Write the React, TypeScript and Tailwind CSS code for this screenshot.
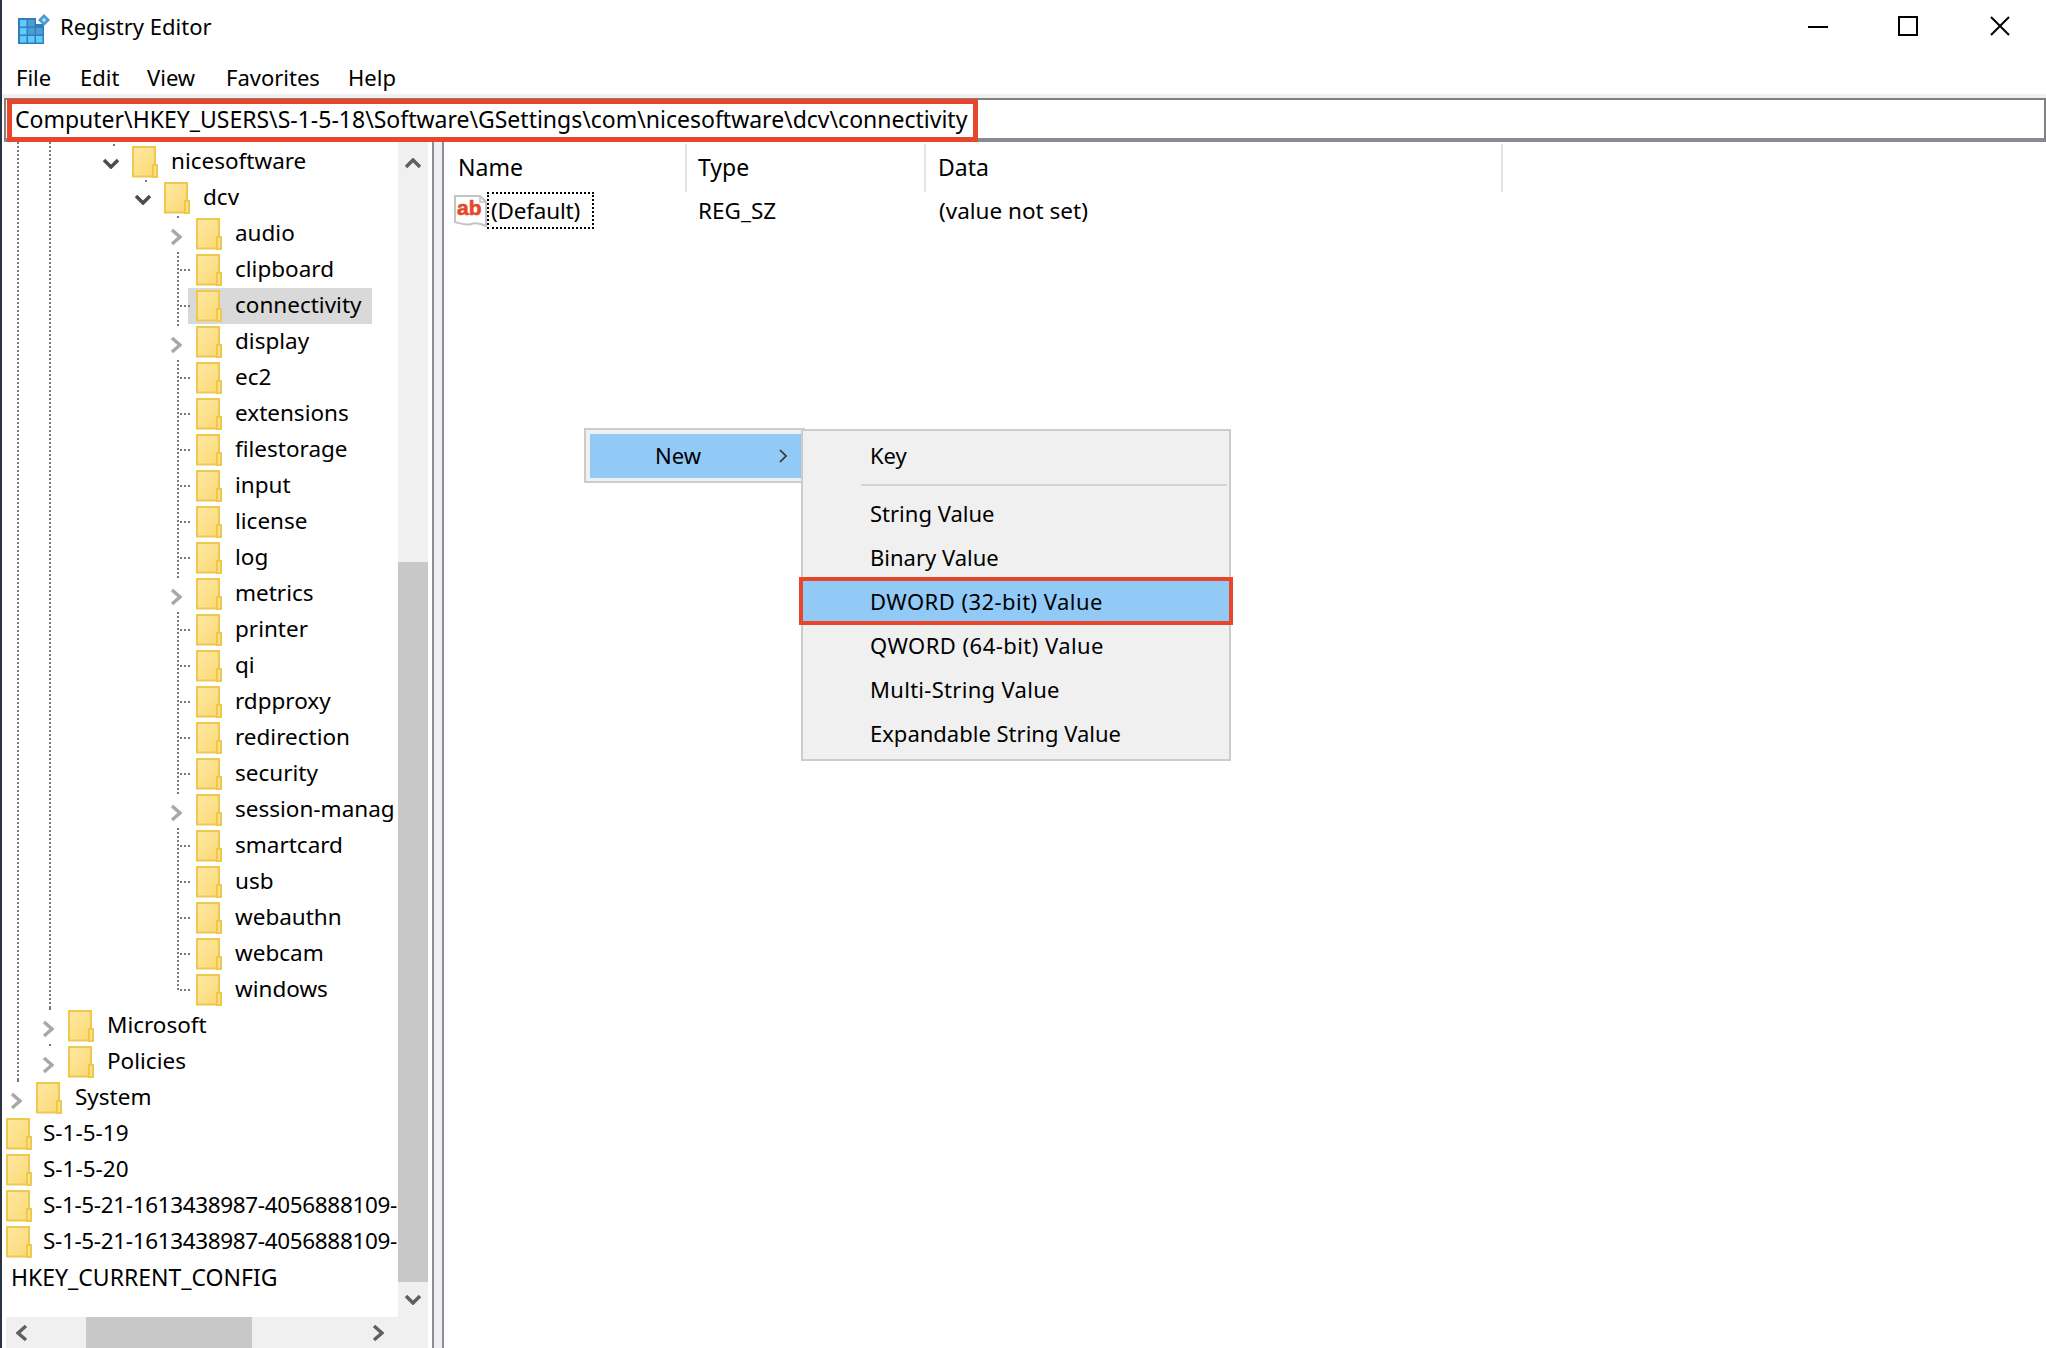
import React from "react";

type Row = {
  label: string;
  level: number;
  chevron?: "right" | "down";
  guide?: "mid" | "last";
  selected?: boolean;
};

const rows: Row[] = [
  { label: "nicesoftware", level: 4, chevron: "down" },
  { label: "dcv", level: 5, chevron: "down" },
  { label: "audio", level: 6, chevron: "right" },
  { label: "clipboard", level: 6, guide: "mid" },
  { label: "connectivity", level: 6, guide: "mid", selected: true },
  { label: "display", level: 6, chevron: "right" },
  { label: "ec2", level: 6, guide: "mid" },
  { label: "extensions", level: 6, guide: "mid" },
  { label: "filestorage", level: 6, guide: "mid" },
  { label: "input", level: 6, guide: "mid" },
  { label: "license", level: 6, guide: "mid" },
  { label: "log", level: 6, guide: "mid" },
  { label: "metrics", level: 6, chevron: "right" },
  { label: "printer", level: 6, guide: "mid" },
  { label: "qi", level: 6, guide: "mid" },
  { label: "rdpproxy", level: 6, guide: "mid" },
  { label: "redirection", level: 6, guide: "mid" },
  { label: "security", level: 6, guide: "mid" },
  { label: "session-manag", level: 6, chevron: "right" },
  { label: "smartcard", level: 6, guide: "mid" },
  { label: "usb", level: 6, guide: "mid" },
  { label: "webauthn", level: 6, guide: "mid" },
  { label: "webcam", level: 6, guide: "mid" },
  { label: "windows", level: 6, guide: "last" },
  { label: "Microsoft", level: 2, chevron: "right" },
  { label: "Policies", level: 2, chevron: "right" },
  { label: "System", level: 1, chevron: "right" },
  { label: "S-1-5-19", level: 0 },
  { label: "S-1-5-20", level: 0 },
  { label: "S-1-5-21-1613438987-4056888109-", level: 0 },
  { label: "S-1-5-21-1613438987-4056888109-", level: 0 },
];

const subItems = [
  { label: "String Value", track: "" },
  { label: "Binary Value", track: "" },
  { label: "DWORD (32-bit) Value", track: "tracking-[0.45px]" },
  { label: "QWORD (64-bit) Value", track: "tracking-[0.45px]" },
  { label: "Multi-String Value", track: "tracking-[0.3px]" },
  { label: "Expandable String Value", track: "" },
];

const vDots = "bg-[repeating-linear-gradient(to_bottom,#7a7a7a_0_2px,transparent_2px_4px)]";
const hDots = "bg-[repeating-linear-gradient(to_right,#7a7a7a_0_2px,transparent_2px_4px)]";

function Folder() {
  return (
    <svg width="26" height="32" viewBox="0 0 26 32" className="shrink-0">
      <defs>
        <linearGradient id="fld" x1="0" y1="0" x2="1" y2="1">
          <stop offset="0" stopColor="#fde9a4" />
          <stop offset="1" stopColor="#fcd873" />
        </linearGradient>
      </defs>
      <rect x="1" y="1" width="22" height="29.5" fill="url(#fld)" stroke="#edc94f" strokeWidth="2" />
      <rect x="21" y="19" width="4" height="12" fill="#fde28a" stroke="#edc94f" strokeWidth="2" />
    </svg>
  );
}

function Chevron({ dir, color = "#a8a8a8" }: { dir: "right" | "left" | "down" | "up"; color?: string }) {
  const d = {
    right: "M2 2 L10 9 L2 16",
    left: "M10 2 L2 9 L10 16",
    down: "M2 2 L9 9 L16 2",
    up: "M2 9 L9 2 L16 9",
  }[dir];
  const wide = dir === "down" || dir === "up";
  return (
    <svg width={wide ? 18 : 12} height={wide ? 11 : 18} viewBox={wide ? "0 0 18 11" : "0 0 12 18"} className="shrink-0">
      <path d={d} fill="none" stroke={color} strokeWidth="3.5" />
    </svg>
  );
}

function TreeRow({ row }: { row: Row }) {
  // folder x inside the tree panel, one level is 32px
  const indent = row.level * 32 - 2;
  const guideX = indent - 19;
  return (
    <div className="relative flex h-9 items-center whitespace-nowrap" style={{ paddingLeft: indent }}>
      {row.guide && (
        <>
          <div className={`absolute top-0 w-[2px] ${vDots} ${row.guide === "last" ? "h-[18px]" : "h-9"}`} style={{ left: guideX }} />
          <div className={`absolute top-[17px] h-[2px] w-[10px] ${hDots}`} style={{ left: guideX + 3 }} />
        </>
      )}
      {row.chevron === "right" && (
        <>
          <div className="absolute top-0 h-[2px] w-[2px] bg-[#7a7a7a]" style={{ left: guideX }} />
          <div className="absolute top-[3px] flex h-9 items-center" style={{ left: indent - 26 }}>
            <Chevron dir="right" color="#a8a8a8" />
          </div>
        </>
      )}
      {row.chevron === "down" && (
        <>
          <div className="absolute top-0 h-[2px] w-[2px] bg-[#7a7a7a]" style={{ left: guideX }} />
          <div className="absolute top-[1px] flex h-9 items-center" style={{ left: indent - 30 }}>
            <Chevron dir="down" color="#4d4d4d" />
          </div>
        </>
      )}
      <div className={`-ml-2 flex h-9 items-center pl-2 ${row.selected ? "w-[184px] bg-[#d9d9d9]" : ""}`}>
        <Folder />
        <span className={`-mt-px text-[22.5px] ${row.level === 0 ? "ml-[11px]" : "ml-[13px]"} ${row.label.length > 20 ? "tracking-[-0.35px]" : ""}`}>{row.label}</span>
      </div>
    </div>
  );
}

function AbIcon() {
  return (
    <svg width="34" height="34" viewBox="0 0 34 34" className="shrink-0">
      <path d="M1 2 H26 L32 8 V32 C26 29 22 28 17 30 C11 32 6 29 1 28 Z" fill="#fff" stroke="#c4c4c4" strokeWidth="2" />
      <path d="M26 2 V8 H32" fill="none" stroke="#c4c4c4" strokeWidth="1.5" />
      <text x="3" y="21" fontFamily="'Liberation Sans', sans-serif" fontWeight="700" fontSize="21" stroke="#e2492a" strokeWidth="0.6" fill="#e2492a">ab</text>
    </svg>
  );
}

function AppIcon() {
  return (
    <svg width="32" height="32" viewBox="0 0 32 32" className="shrink-0">
      <path d="M0 4 H18 V10 H26 V30 H0 Z" fill="#2f7fbe" />
      <rect x="2" y="6" width="6.5" height="6.5" fill="#5ecbfb" />
      <rect x="10" y="6" width="6.5" height="6.5" fill="#4b9ed3" />
      <rect x="2" y="14" width="6.5" height="6.5" fill="#5ecbfb" />
      <rect x="10" y="14" width="6.5" height="6.5" fill="#4b9ed3" />
      <rect x="18" y="14" width="6.5" height="6.5" fill="#4b9ed3" />
      <rect x="2" y="22" width="6.5" height="6.5" fill="#5ecbfb" />
      <rect x="10" y="22" width="6.5" height="6.5" fill="#5ecbfb" />
      <rect x="18" y="22" width="6.5" height="6.5" fill="#5ecbfb" />
      <path d="M26 0 L32 6 L26 12 L20 6 Z" fill="#4a9bd4" />
      <rect x="24.5" y="4.5" width="3" height="3" fill="#bfe6fa" />
    </svg>
  );
}

export default function App() {
  return (
    <div className="relative flex h-[1348px] w-[2046px] flex-col overflow-hidden border-l-2 border-[#2a3440] bg-white font-['Noto_Sans',sans-serif] text-[23px] leading-none text-black">
      {/* title bar */}
      <div className="flex h-[60px] shrink-0 items-start">
        <div className="ml-4 mt-[14px]">
          <AppIcon />
        </div>
        <span className="ml-[10px] mt-[15px] text-[22px]">Registry Editor</span>
        <div className="ml-auto flex items-center pt-4">
          <svg width="20" height="20" viewBox="0 0 20 20"><path d="M0 11 H20" stroke="#000" strokeWidth="2" /></svg>
          <svg width="20" height="20" viewBox="0 0 20 20" className="ml-[70px]"><rect x="1" y="1" width="18" height="18" fill="none" stroke="#000" strokeWidth="2" /></svg>
          <svg width="20" height="20" viewBox="0 0 20 20" className="ml-[72px] mr-9"><path d="M1 1 L19 19 M19 1 L1 19" stroke="#000" strokeWidth="2" /></svg>
        </div>
      </div>

      {/* menu bar */}
      <div className="flex h-[34px] shrink-0 items-start pl-[14px] pt-[6px] text-[22px]">
        <span className="w-[64px]">File</span>
        <span className="w-[67px]">Edit</span>
        <span className="w-[79px]">View</span>
        <span className="w-[122px]">Favorites</span>
        <span>Help</span>
      </div>
      <div className="h-1 shrink-0 bg-[#f0f0f0]" />

      {/* address bar */}
      <div className="relative ml-[2px] flex h-[44px] shrink-0 items-center border-x-2 border-b-4 border-t-2 border-x-[#808080] border-b-[#858a94] border-t-[#808080] pl-[9px]">
        <span>Computer\HKEY_USERS\S-1-5-18\Software\GSettings\com\nicesoftware\dcv\connectivity</span>
        <div className="absolute left-[1px] top-[-1px] h-[43px] w-[971px] border-[5px] border-[#e8452a]" />
      </div>

      {/* panes */}
      <div className="flex min-h-0 flex-1">
        <div className="flex w-[430px] shrink-0 flex-col">
          <div className="flex min-h-0 flex-1">
            <div className="relative ml-1 w-[392px] overflow-hidden pt-[2px]">
              <div className={`absolute left-[11px] top-0 h-[938px] w-[2px] ${vDots}`} />
              <div className={`absolute left-[43px] top-0 h-[866px] w-[2px] ${vDots}`} />
              {rows.map((r, i) => (
                <TreeRow key={i} row={r} />
              ))}
              <div className="flex h-9 items-center whitespace-nowrap pb-[2px] pl-[5px]">HKEY_CURRENT_CONFIG</div>
            </div>
            <div className="flex w-[30px] shrink-0 flex-col items-center bg-[#f0f0f0]">
              <div className="mt-4 flex h-[10px] items-center">
                <Chevron dir="up" color="#606060" />
              </div>
              <div className="mt-[394px] h-[720px] w-full bg-[#c8c8c8]" />
              <div className="mt-3 flex h-[10px] items-center">
                <Chevron dir="down" color="#606060" />
              </div>
            </div>
          </div>
          <div className="ml-1 flex h-[31px] w-[422px] shrink-0 items-center bg-[#f0f0f0]">
            <div className="ml-[10px]">
              <Chevron dir="left" color="#606060" />
            </div>
            <div className="ml-[58px] h-full w-[166px] bg-[#c8c8c8]" />
            <div className="ml-[120px]">
              <Chevron dir="right" color="#606060" />
            </div>
          </div>
        </div>

        <div className="w-3 shrink-0 border-x-2 border-[#8a8f99] bg-[#f0f0f0]" />

        <div className="min-w-0 flex-1 pt-[2px]">
          <div className="flex h-12">
            <div className="flex w-[243px] items-center border-r-2 border-[#e5e5e5] pb-[2px] pl-[14px]">Name</div>
            <div className="flex w-[239px] items-center border-r-2 border-[#e5e5e5] pb-[2px] pl-[11px]">Type</div>
            <div className="flex w-[577px] items-center border-r-2 border-[#e5e5e5] pb-[2px] pl-3">Data</div>
          </div>
          <div className="flex h-[37px] items-center text-[22.5px]">
            <div className="flex w-[243px] items-center pl-[10px]">
              <AbIcon />
              <div className="-ml-[1px] flex h-[37px] w-[107px] items-center border-2 border-dotted border-black pl-[2px] pt-[1px] tracking-[-0.2px]">(Default)</div>
            </div>
            <div className="w-[239px] pl-[11px] pt-[1px]">REG_SZ</div>
            <div className="pl-[13px] pt-[1px]">(value not set)</div>
          </div>
        </div>
      </div>

      {/* context menu */}
      <div className="absolute left-[582px] top-[428px] flex h-[55px] w-[221px] items-center border-2 border-[#cccccc] bg-[#f0f0f0] pl-1 text-[22px]">
        <div className="flex h-[44px] w-full items-center bg-[#91c9f7] pl-[65px]">
          <span className="-mt-[2px]">New</span>
          <svg width="10" height="14" viewBox="0 0 10 14" className="ml-auto mr-[15px]">
            <path d="M2 1 L8 7 L2 13" fill="none" stroke="#333" strokeWidth="1.7" />
          </svg>
        </div>
      </div>

      <div className="absolute left-[799px] top-[429px] flex h-[332px] w-[430px] flex-col border-2 border-[#cccccc] bg-[#f0f0f0] pt-[3px] text-[22px]">
        <div className="flex h-[44px] shrink-0 items-center pb-[2px] pl-[67px]">Key</div>
        <div className="my-[6px] ml-[58px] mr-[2px] h-[2px] shrink-0 bg-[#d4d4d4]" />
        {subItems.map((s) => (
          <div key={s.label} className={`relative flex h-[44px] shrink-0 items-center pb-[2px] pl-[67px] ${s.track} ${s.label.startsWith("DWORD") ? "bg-[#91c9f7]" : ""}`}>
            {s.label}
            {s.label.startsWith("DWORD") && <div className="absolute -bottom-px -left-1 -right-1 -top-[3px] border-4 border-[#e8452a]" />}
          </div>
        ))}
      </div>
    </div>
  );
}
